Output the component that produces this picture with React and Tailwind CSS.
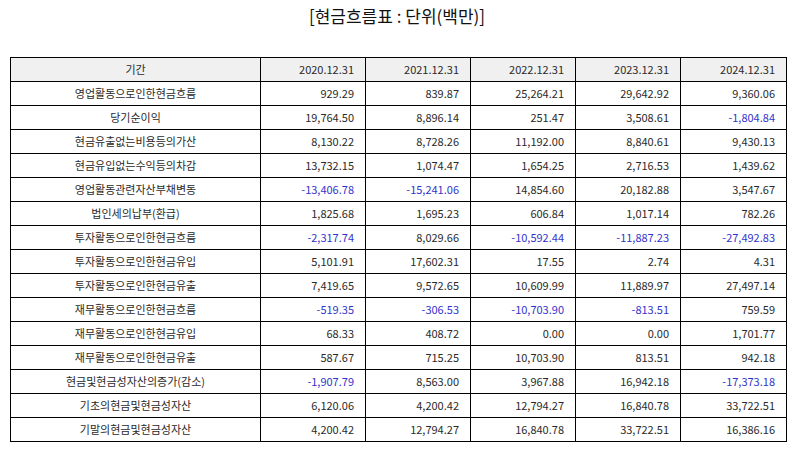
import React from 'react';

const years = ['2020.12.31', '2021.12.31', '2022.12.31', '2023.12.31', '2024.12.31'];

const rows = [
  ['영업활동으로인한현금흐름', '929.29', '839.87', '25,264.21', '29,642.92', '9,360.06'],
  ['당기순이익', '19,764.50', '8,896.14', '251.47', '3,508.61', '-1,804.84'],
  ['현금유출없는비용등의가산', '8,130.22', '8,728.26', '11,192.00', '8,840.61', '9,430.13'],
  ['현금유입없는수익등의차감', '13,732.15', '1,074.47', '1,654.25', '2,716.53', '1,439.62'],
  ['영업활동관련자산부채변동', '-13,406.78', '-15,241.06', '14,854.60', '20,182.88', '3,547.67'],
  ['법인세의납부(환급)', '1,825.68', '1,695.23', '606.84', '1,017.14', '782.26'],
  ['투자활동으로인한현금흐름', '-2,317.74', '8,029.66', '-10,592.44', '-11,887.23', '-27,492.83'],
  ['투자활동으로인한현금유입', '5,101.91', '17,602.31', '17.55', '2.74', '4.31'],
  ['투자활동으로인한현금유출', '7,419.65', '9,572.65', '10,609.99', '11,889.97', '27,497.14'],
  ['재무활동으로인한현금흐름', '-519.35', '-306.53', '-10,703.90', '-813.51', '759.59'],
  ['재무활동으로인한현금유입', '68.33', '408.72', '0.00', '0.00', '1,701.77'],
  ['재무활동으로인한현금유출', '587.67', '715.25', '10,703.90', '813.51', '942.18'],
  ['현금및현금성자산의증가(감소)', '-1,907.79', '8,563.00', '3,967.88', '16,942.18', '-17,373.18'],
  ['기초의현금및현금성자산', '6,120.06', '4,200.42', '12,794.27', '16,840.78', '33,722.51'],
  ['기말의현금및현금성자산', '4,200.42', '12,794.27', '16,840.78', '33,722.51', '16,386.16'],
];

export default function App() {
  return (
    <div
      className="w-[794px] h-[452px] bg-white text-[#2a2a2a] px-[10px]"
      style={{ fontFamily: '"Noto Sans CJK KR", "Noto Sans", sans-serif' }}
    >
      <h1 className="h-[57px] pt-[4px] text-center text-[17px] leading-[24px] text-[#111]">
        [현금흐름표 : 단위(백만)]
      </h1>
      <table className="w-[776px] border-collapse table-fixed text-[11px]">
        <colgroup>
          <col className="w-[250px]" />
          <col className="w-[105px]" />
          <col className="w-[105px]" />
          <col className="w-[105px]" />
          <col className="w-[105px]" />
          <col className="w-[106px]" />
        </colgroup>
        <thead>
          <tr className="h-[24px] bg-[#f0f0f0]">
            <th className="border border-black font-normal text-center">기간</th>
            {years.map((y) => (
              <th key={y} className="border border-black font-normal text-right pr-[11px]">
                {y}
              </th>
            ))}
          </tr>
        </thead>
        <tbody>
          {rows.map(([label, ...vals]) => (
            <tr key={label} className="h-[24px]">
              <td className="border border-black text-center">{label}</td>
              {vals.map((v, i) => (
                <td
                  key={i}
                  className={
                    v.startsWith('-')
                      ? 'border border-black text-right pr-[11px] text-[#3333cc]'
                      : 'border border-black text-right pr-[11px]'
                  }
                >
                  {v}
                </td>
              ))}
            </tr>
          ))}
        </tbody>
      </table>
    </div>
  );
}
